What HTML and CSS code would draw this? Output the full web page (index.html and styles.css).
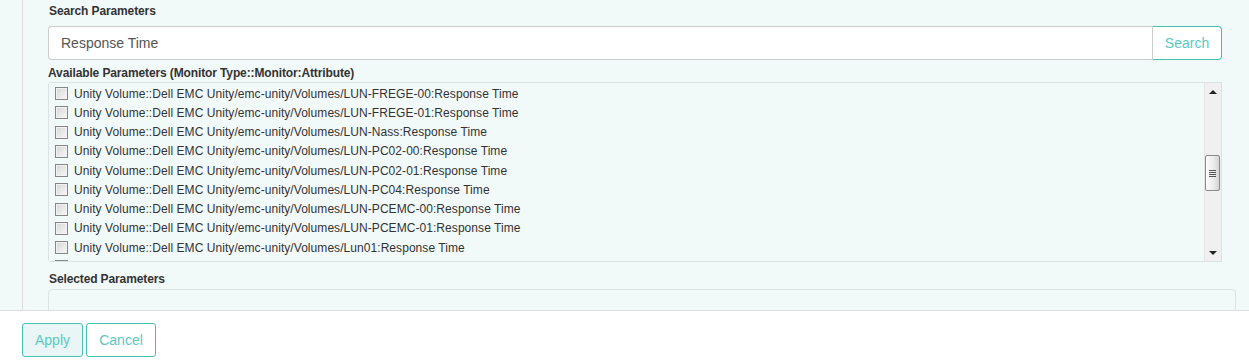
FILE: index.html
```html
<!DOCTYPE html>
<html>
<head>
<meta charset="utf-8">
<link rel="stylesheet" href="styles.css">
</head>
<body>
<div class="main">
  <div class="panel">
    <div class="label">Search Parameters</div>
    <div class="input-group">
      <input class="search-input" type="text" value="Response Time">
      <button class="search-btn">Search</button>
    </div>
    <div class="label label-avail">Available Parameters (Monitor Type::Monitor:Attribute)</div>
    <div class="listbox">
      <div class="list">
        <label class="row"><input type="checkbox" class="cb"><span>Unity Volume::Dell EMC Unity/emc-unity/Volumes/LUN-FREGE-00:Response Time</span></label>
        <label class="row"><input type="checkbox" class="cb"><span>Unity Volume::Dell EMC Unity/emc-unity/Volumes/LUN-FREGE-01:Response Time</span></label>
        <label class="row"><input type="checkbox" class="cb"><span>Unity Volume::Dell EMC Unity/emc-unity/Volumes/LUN-Nass:Response Time</span></label>
        <label class="row"><input type="checkbox" class="cb"><span>Unity Volume::Dell EMC Unity/emc-unity/Volumes/LUN-PC02-00:Response Time</span></label>
        <label class="row"><input type="checkbox" class="cb"><span>Unity Volume::Dell EMC Unity/emc-unity/Volumes/LUN-PC02-01:Response Time</span></label>
        <label class="row"><input type="checkbox" class="cb"><span>Unity Volume::Dell EMC Unity/emc-unity/Volumes/LUN-PC04:Response Time</span></label>
        <label class="row"><input type="checkbox" class="cb"><span>Unity Volume::Dell EMC Unity/emc-unity/Volumes/LUN-PCEMC-00:Response Time</span></label>
        <label class="row"><input type="checkbox" class="cb"><span>Unity Volume::Dell EMC Unity/emc-unity/Volumes/LUN-PCEMC-01:Response Time</span></label>
        <label class="row"><input type="checkbox" class="cb"><span>Unity Volume::Dell EMC Unity/emc-unity/Volumes/Lun01:Response Time</span></label>
        <label class="row"><input type="checkbox" class="cb"><span>Unity Volume::Dell EMC Unity/emc-unity/Volumes/Lun02:Response Time</span></label>
      </div>
      <div class="scrollbar">
        <div class="arrow-box"><span class="arrow-up"></span></div>
        <div class="track"><div class="thumb"><span class="grip"></span><span class="grip"></span><span class="grip"></span><span class="grip"></span></div></div>
        <div class="arrow-box"><span class="arrow-down"></span></div>
      </div>
    </div>
    <div class="label label-sel">Selected Parameters</div>
    <div class="selected-box"></div>
  </div>
</div>
<div class="footer">
  <button class="btn btn-apply">Apply</button>
  <button class="btn btn-cancel">Cancel</button>
</div>
</body>
</html>
```

FILE: styles.css
```css
* { box-sizing: border-box; }
html, body { margin: 0; padding: 0; background: #ffffff; }
body { font-family: "Liberation Sans", Arial, sans-serif; color: #333; }

.main {
  height: 310px;
  background: #f2f9f9;
  padding-left: 22px;
  overflow: hidden;
}
.panel {
  height: 310px;
  border-left: 1px solid #dcdcdc;
  padding: 3px 27px 0 25px;
}
.label {
  font-size: 12px;
  font-weight: bold;
  line-height: 16px;
  color: #333;
  letter-spacing: -0.12px;
  padding-left: 1px;
}
.label:first-child { margin-bottom: 7px; }
.label-avail { margin-top: 5px; margin-bottom: 1px; padding-left: 0; }
.label-sel { margin-top: 9px; margin-bottom: 2px; }

.input-group { display: flex; height: 34px; }
.search-input {
  flex: 1;
  height: 34px;
  border: 1px solid #cccccc;
  border-right: none;
  border-radius: 4px 0 0 4px;
  background: #fff;
  font-family: "Liberation Sans", Arial, sans-serif;
  font-size: 14px;
  color: #555;
  padding: 0 12px;
  outline: none;
}
.search-btn {
  width: 70px;
  height: 34px;
  border: 1px solid #45c0b3;
  border-left: 1px solid #cccccc;
  border-radius: 0 4px 4px 0;
  background: #fff;
  color: #5cc8bf;
  font-family: "Liberation Sans", Arial, sans-serif;
  font-size: 14px;
  padding: 0;
}

.listbox {
  display: flex;
  height: 180px;
  border: 1px solid #dde3e3;
  border-radius: 3px 0 0 3px;
  background: #f2f9f9;
}
.list {
  flex: 1;
  overflow: hidden;
  padding-top: 1px;
}
.row {
  display: flex;
  align-items: center;
  height: 19.25px;
  font-size: 12px;
  color: #333;
  padding-left: 6px;
  white-space: nowrap;
  letter-spacing: 0.06px;
}
.cb {
  appearance: none;
  -webkit-appearance: none;
  width: 13px;
  height: 13px;
  margin: 0 6px 0 0;
  border: 1px solid #868686;
  background: linear-gradient(135deg, #d6d6d6 0%, #eaeaea 60%, #f8f8f8 100%);
  box-shadow: inset 0 0 0 1px #f2f2f2;
  flex: none;
}

.scrollbar {
  width: 17px;
  display: flex;
  flex-direction: column;
  background: #f0f0f0;
  border-left: 1px solid #e6e6e6;
}
.arrow-box {
  height: 17px;
  display: flex;
  align-items: center;
  justify-content: center;
}
.arrow-up {
  width: 0; height: 0;
  border-left: 4px solid transparent;
  border-right: 4px solid transparent;
  border-bottom: 4px solid #222;
}
.arrow-down {
  width: 0; height: 0;
  border-left: 4px solid transparent;
  border-right: 4px solid transparent;
  border-top: 4px solid #222;
}
.track { flex: 1; }
.thumb {
  margin-top: 55px;
  width: 15px;
  height: 36px;
  border: 1px solid #8a8a8a;
  border-radius: 2px;
  background: linear-gradient(90deg, #fdfdfd 0%, #eaeaea 60%, #d4d4d4 100%);
  display: flex;
  flex-direction: column;
  align-items: center;
  justify-content: center;
  gap: 1px;
}
.grip {
  width: 7px;
  height: 1px;
  background: #555;
}

.selected-box {
  height: 40px;
  margin-right: -14px;
  border: 1px solid #dde3e3;
  border-radius: 4px;
  background: #f2f9f9;
}

.footer {
  border-top: 1px solid #dedede;
  background: #fff;
  padding: 12px 0 0 22px;
  display: flex;
  gap: 3px;
}
.btn {
  height: 34px;
  border: 1px solid #45c0b3;
  border-radius: 3px;
  font-family: "Liberation Sans", Arial, sans-serif;
  font-size: 14px;
  color: #5cc8bf;
  padding: 0 12px;
}
.btn-apply { width: 61px; background: #e9f6f5; }
.btn-cancel { width: 70px; background: #fff; }
```
